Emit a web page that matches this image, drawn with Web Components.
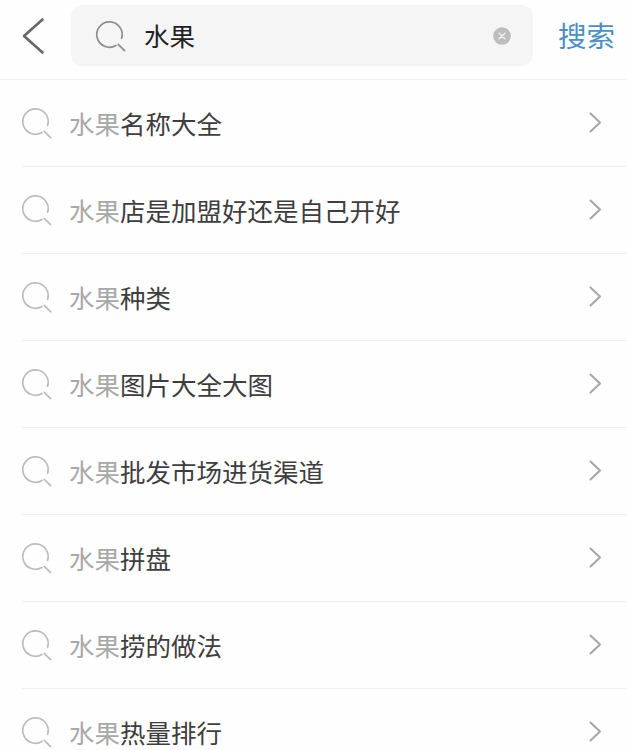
<!DOCTYPE html>
<html lang="zh"><head><meta charset="utf-8">
<style>
html,body{margin:0;padding:0;background:#fefefe;height:750px;overflow:hidden}
body{font-family:"Noto Sans CJK SC","Liberation Sans",sans-serif}
</style></head><body>
<search-page>
  <search-header query="水果"></search-header>
  <suggest-row rest="名称大全"></suggest-row>
  <suggest-row rest="店是加盟好还是自己开好"></suggest-row>
  <suggest-row rest="种类"></suggest-row>
  <suggest-row rest="图片大全大图"></suggest-row>
  <suggest-row rest="批发市场进货渠道"></suggest-row>
  <suggest-row rest="拼盘"></suggest-row>
  <suggest-row rest="捞的做法"></suggest-row>
  <suggest-row rest="热量排行"></suggest-row>
</search-page>
<script>
const lens = (c,w)=>`<svg viewBox="0 0 30 30" width="30" height="30" fill="none" stroke="${c}" stroke-width="${w}" stroke-linecap="round" style="overflow:visible"><path d="M25.6 17.3A12.7 12.7 0 1 0 19.9 24.5"/><path d="M22.2 23.4 28.6 29.6"/></svg>`;
class SearchPage extends HTMLElement{constructor(){super();this.attachShadow({mode:'open'}).innerHTML=`<style>:host{display:flex;flex-direction:column;width:627px;height:750px;overflow:hidden}</style><slot></slot>`}}
class SearchHeader extends HTMLElement{constructor(){super();const q=this.getAttribute('query');this.attachShadow({mode:'open'}).innerHTML=`<style>
:host{display:flex;align-items:flex-start;box-sizing:border-box;height:80px;flex:none;border-bottom:1.5px solid #efefef;padding:5px 11px 0 22px}
.back{width:22px;height:36px;margin:13px 27px 0 0;flex:none;display:block}
.box{width:462px;height:61px;flex:none;background:#f5f5f5;border-radius:12px;display:flex;align-items:center;box-sizing:border-box;padding:0 21px 0 25px}
.icon{width:30px;height:30px;flex:none;margin:0 18px 0 0;display:block}
.q{flex:1;font-size:25.5px;line-height:30px;color:#222;margin-top:-1px}
.clear{width:18px;height:18px;flex:none;display:block;margin-right:1px}
.go{font-size:28.5px;line-height:36px;color:#4a90c6;margin:12px 0 0 25px;white-space:nowrap}
</style>
<svg class="back" viewBox="0 0 22 36" fill="none" stroke="#666" stroke-width="2.6" stroke-linecap="round" stroke-linejoin="round"><path d="M20.5 1.5 2 18l18.5 16.5"/></svg>
<div class="box"><span class="icon">${lens('#8c8c8c',1.7)}</span><span class="q">${q}</span>
<svg class="clear" viewBox="0 0 18 18"><circle cx="9" cy="9" r="8.8" fill="#bdbdbd"/><path d="M6.2 6.2l5.6 5.6M11.8 6.2l-5.6 5.6" stroke="#f0f0f0" stroke-width="1.5" stroke-linecap="round"/></svg></div>
<span class="go">搜索</span>`}}
class SuggestRow extends HTMLElement{constructor(){super();const r=this.getAttribute('rest');this.attachShadow({mode:'open'}).innerHTML=`<style>
:host{display:block;flex:none;height:87px;box-sizing:border-box;padding-left:22px}
.row{height:87px;box-sizing:border-box;border-bottom:1.5px solid #efefef;display:flex;align-items:center;padding:0 25px 1px 0}
.icon{width:30px;height:30px;flex:none;margin:0 17px 0 0;display:block}
.t{flex:1;font-size:25.5px;line-height:34px;color:#3e3e3e;white-space:nowrap}
.m{color:#a8a8a8}
.chev{width:13px;height:21px;flex:none;display:block}
</style><div class="row"><span class="icon">${lens('#bcbcbc',1.7)}</span><span class="t"><span class="m">水果</span>${r}</span>
<svg class="chev" viewBox="0 0 13 21" fill="none" stroke="#a6a6a6" stroke-width="2" stroke-linecap="round" stroke-linejoin="round"><path d="M1.5 1.5 11 10.5 1.5 19.5"/></svg></div>`}}
customElements.define('search-page',SearchPage);
customElements.define('search-header',SearchHeader);
customElements.define('suggest-row',SuggestRow);
</script>
</body></html>
